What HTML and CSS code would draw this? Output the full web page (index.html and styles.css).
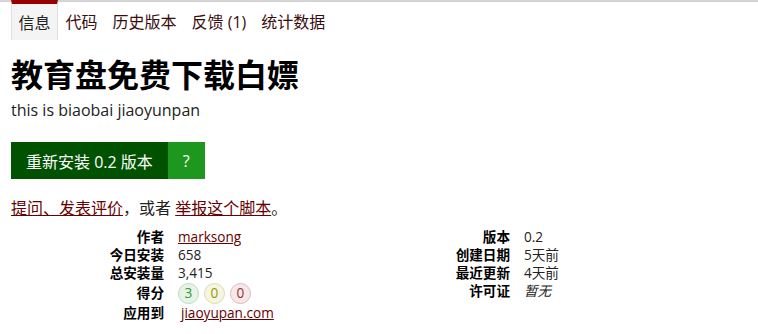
FILE: index.html
```html
<!DOCTYPE html>
<html lang="zh-CN">
<head>
<meta charset="utf-8">
<link rel="stylesheet" href="styles.css">
</head>
<body>
<div class="topline"></div>
<main class="page">
  <nav class="tabs">
    <span class="tab current">信息</span>
    <a class="tab" href="#">代码</a>
    <a class="tab" href="#">历史版本</a>
    <a class="tab" href="#">反馈 (1)</a>
    <a class="tab" href="#">统计数据</a>
  </nav>
  <header class="head">
    <h2 class="title">教育盘免费下载白嫖</h2>
    <p class="desc">this is biaobai jiaoyunpan</p>
  </header>
  <div class="install">
    <a class="install-link" href="#">重新安装 0.2 版本</a>
    <a class="install-help" href="#">?</a>
  </div>
  <p class="feedback"><a href="#">提问、发表评价</a>，或者 <a href="#">举报这个脚本</a>。</p>
  <div class="meta">
    <dl class="meta-col">
      <dt>作者</dt><dd><a href="#">marksong</a></dd>
      <dt>今日安装</dt><dd>658</dd>
      <dt>总安装量</dt><dd>3,415</dd>
      <dt class="score-dt">得分</dt>
      <dd class="scores"><span class="badge good">3</span><span class="badge ok">0</span><span class="badge bad">0</span></dd>
      <dt>应用到</dt><dd><a class="applies" href="#">jiaoyupan.com</a></dd>
    </dl>
    <dl class="meta-col">
      <dt>版本</dt><dd>0.2</dd>
      <dt>创建日期</dt><dd>5天前</dd>
      <dt>最近更新</dt><dd>4天前</dd>
      <dt>许可证</dt><dd><em>暂无</em></dd>
    </dl>
  </div>
</main>
</body>
</html>
```
FILE: styles.css
```css
html, body {
  margin: 0;
  padding: 0;
  background: #fff;
}
body {
  font-family: "Open Sans", "Noto Sans CJK SC", sans-serif;
  color: #222;
  font-size: 16px;
}
a {
  color: #670000;
}
.topline {
  height: 2px;
  background: #d4d4d4;
}
.page {
  padding: 0 11px;
}
.tabs {
  display: flex;
  margin-top: -2px;
  height: 40px;
}
.tab {
  display: flex;
  align-items: center;
  padding: 2px 7.5px 0;
  color: #222;
  text-decoration: none;
  font-size: 16px;
}
.tabs a.tab {
  color: #3a0d0d;
}
.tab.current {
  background: #f4f4f4;
  border-top: 4px solid #990000;
  border-left: 1px solid #e0e0e0;
  border-right: 1px solid #e0e0e0;
  padding: 0 6.5px;
  color: #222;
}
.head {
  margin-top: 13px;
}
.title {
  margin: 0;
  font-size: 32px;
  line-height: 44px;
  font-weight: 700;
  color: #000;
}
.desc {
  margin: 3px 0 0;
  font-size: 16px;
  line-height: 20px;
  color: #222;
}
.install {
  display: flex;
  margin-top: 22px;
  height: 37px;
}
.install-link, .install-help {
  display: flex;
  align-items: center;
  color: #fff;
  text-decoration: none;
  font-size: 16px;
}
.install-link {
  background: #005200;
  padding: 0 15px;
}
.install-help {
  background: #1e971e;
  padding: 0 15px;
}
.feedback {
  margin: 17px 0 0;
  font-size: 16px;
  line-height: 24px;
  color: #222;
}
.meta {
  display: grid;
  grid-template-columns: 346px 346px;
  margin-top: 8px;
  font-size: 13.6px;
}
.meta-col {
  display: grid;
  grid-template-columns: 153px auto;
  column-gap: 14px;
  align-content: start;
  margin: 0;
}
.meta-col dt {
  text-align: right;
  font-weight: 700;
  color: #000;
  line-height: 18px;
}
.meta-col dd {
  margin: 0;
  line-height: 18px;
  color: #222;
}
.meta-col .score-dt, .meta-col .scores {
  line-height: 22px;
}
.scores {
  display: flex;
  gap: 5px;
  align-items: center;
}
.badge {
  display: inline-flex;
  align-items: center;
  justify-content: center;
  width: 19px;
  height: 19px;
  border-radius: 50%;
  font-size: 13.6px;
  line-height: 1;
}
.good {
  background: #e6f3e6;
  border: 1px solid #b6dcb6;
  color: #339933;
}
.ok {
  background: #f5f5e4;
  border: 1px solid #dcdcaa;
  color: #999900;
}
.bad {
  background: #f6e8e8;
  border: 1px solid #e0b8b8;
  color: #993333;
}
.applies {
  margin-left: 3px;
}
em {
  font-style: italic;
}
```
